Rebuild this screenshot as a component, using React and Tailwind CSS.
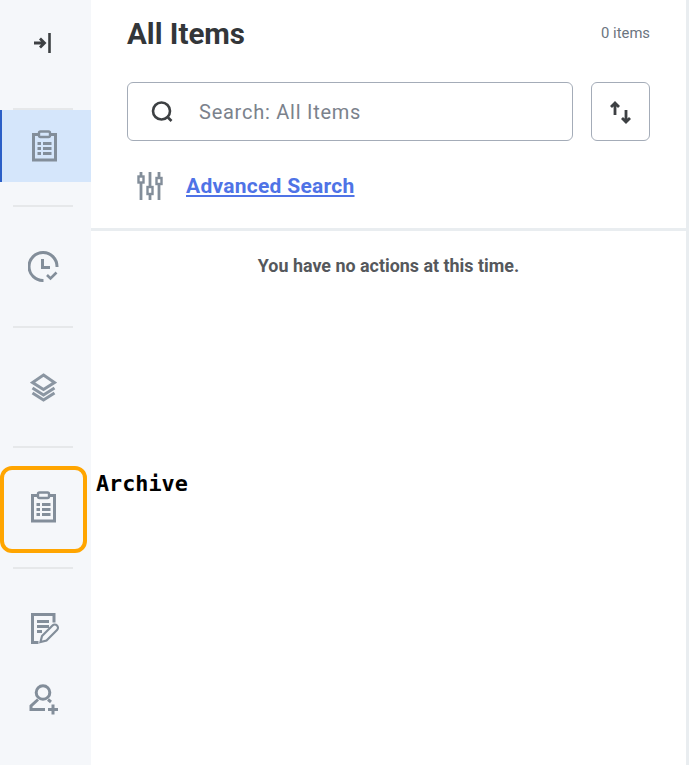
import React from "react";

const Clip = () => (
  <svg width="25" height="32" viewBox="0 0 25 32" fill="none" stroke="#838e9a">
    <path d="M7 4.500H1.500v25.500h22V4.500H18" strokeWidth="3" />
    <rect x="7" y="1.500" width="11" height="5.500" rx="1.500" strokeWidth="2.400" />
    <path d="M5.500 13.500h3.500M11 13.500h8.500M5.500 18.500h3.500M11 18.500h8.500M5.500 23.500h3.500M11 23.500h8.500" strokeWidth="3" />
  </svg>
);

const Divider = () => <div className="mr-[18px] ml-[13px] h-[2px] shrink-0 bg-[#e6e8ea]" />;

const Slot = ({ h, children, cls = "" }) => (
  <div className={`flex shrink-0 items-center justify-center pr-[5px] ${h} ${cls}`}>{children}</div>
);

export default function App() {
  return (
    <div
      className="relative flex h-[765px] w-[689px] overflow-hidden bg-white"
      style={{ fontFamily: "Roboto, sans-serif" }}
    >
      <aside className="flex w-[91px] shrink-0 flex-col bg-[#f5f7fa]">
        <Slot h="h-[86px]">
          <svg width="20" height="22" viewBox="0 0 20 22" fill="none" stroke="#3d4043" strokeWidth="2.800">
            <path d="M1 11h10M7 6.500l4.500 4.500L7 15.500" />
            <path d="M16.500 1v20" strokeWidth="2.600" />
          </svg>
        </Slot>
        <div className="h-[22px] shrink-0" />
        <Divider />
        <Slot h="h-[72px]" cls="border-l-2 border-[#2b5fc7] bg-[#d5e6fb]">
          <Clip />
        </Slot>
        <div className="h-[23px] shrink-0" />
        <Divider />
        <Slot h="h-[119px]" cls="pb-[1px]">
          <svg width="31" height="31" viewBox="0 0 31 31" fill="none" stroke="#838e9a" strokeWidth="3">
            <path d="M29 16A14 14 0 1 0 15.500 29.500" />
            <path d="M14.500 8v8.500H22" />
            <path d="M19 24l3.500 3.500 6-6" strokeWidth="2.600" />
          </svg>
        </Slot>
        <Divider />
        <Slot h="h-[118px]" cls="pt-[1px]">
          <svg width="27" height="29" viewBox="0 0 27 29" fill="none" stroke="#8b96a2" strokeWidth="3">
            <path d="M13.500 2 24.500 9.500l-11 7-11-7z" />
            <path d="M2.500 15l11 7 11-7" />
            <path d="M2.500 20l11 7 11-7" />
          </svg>
        </Slot>
        <Divider />
        <Slot h="h-[119px]" cls="pb-[1px]">
          <Clip />
        </Slot>
        <Divider />
        <Slot h="h-[118px]" cls="pl-[3px]">
          <svg width="28" height="31" viewBox="0 0 28 31" fill="none" stroke="#838e9a" strokeWidth="2.800">
            <path d="M23 9.500V1.500H1.500v28h6" strokeWidth="3" />
            <path d="M6 8.500h12M6 13.500h12M6 18.500h5" />
            <path d="M9.500 29l1.500-6L21.500 12.500a2.500 2.500 0 0 1 4.500 4.500L15.500 27.500z" strokeWidth="2.200" />
          </svg>
        </Slot>
        <Slot h="h-[24px]">
          <svg className="mt-[1px]" width="29" height="31" viewBox="0 0 29 31" fill="none" stroke="#838e9a" strokeWidth="3">
            <circle cx="14" cy="8.500" r="6.800" />
            <path d="M9 15.500 2 22v3.500h14M19 15.500l3 2.500" />
            <path d="M24 20.500v10M19 25.500h10" />
          </svg>
        </Slot>
      </aside>

      <main className="flex min-w-0 flex-1 flex-col border-r-[3px] border-[#e9edf0]">
        <div className="h-[231px] shrink-0 border-b-[3px] border-[#e9edf0] px-[36px]">
          <div className="flex h-[82px] items-start justify-between">
            <h1 className="mt-[16px] text-[29.500px] leading-[36px] font-bold text-[#333639]">All Items</h1>
            <span className="mt-[25px] text-[14.800px] leading-[17px] text-[#6b7480]">0 items</span>
          </div>
          <div className="flex gap-[18px]">
            <div className="flex h-[59px] flex-1 items-center rounded-[6px] border border-[#a4acb8] pl-[22px]">
              <svg width="24" height="24" viewBox="0 0 24 24" fill="none" stroke="#3d4043" strokeWidth="2.600">
                <circle cx="11.500" cy="11" r="8.500" />
                <path d="m18 17.500 3.500 3.500" />
              </svg>
              <span className="ml-[25px] text-[20px] tracking-[0.75px] text-[#7b828c]">Search: All Items</span>
            </div>
            <button className="flex h-[59px] w-[59px] shrink-0 items-center justify-center rounded-[6px] border border-[#a4acb8]">
              <svg width="22" height="24" viewBox="0 0 22 24" fill="none" stroke="#3d4043" strokeWidth="2.800">
                <path d="M5 15V3M1 7l4-4 4 4" />
                <path d="M16 10v12M12 18l4 4 4-4" />
              </svg>
            </button>
          </div>
          <div className="mt-[31px] flex items-center pl-[10px]">
            <svg width="26" height="28" viewBox="0 0 26 28" fill="none" stroke="#838e9a" strokeWidth="2.800">
              <path d="M4 0v4M4 11v17M13 0v14M13 23v5M22 0v5M22 12v16" />
              <rect x="1.500" y="4.500" width="5" height="6" strokeWidth="2.400" />
              <rect x="10.500" y="15" width="5" height="7" strokeWidth="2.400" />
              <rect x="19.500" y="6" width="5" height="6" strokeWidth="2.400" />
            </svg>
            <a className="ml-[23px] text-[21px] leading-[28px] font-bold tracking-[0.27px] text-[#4f73e6] underline" href="#">
              Advanced Search
            </a>
          </div>
        </div>
        <p className="mt-[23px] text-center text-[17.900px] leading-[24px] font-bold text-[#55585c]">
          You have no actions at this time.
        </p>
      </main>

      <div className="absolute top-[466px] left-0 h-[87px] w-[87px] rounded-[12px] border-4 border-[#ffa500]" />
      <span
        className="absolute top-[470px] left-[96px] text-[21.800px] leading-[28px] font-bold text-black"
        style={{ fontFamily: '"DejaVu Sans Mono", monospace' }}
      >
        Archive
      </span>
    </div>
  );
}
